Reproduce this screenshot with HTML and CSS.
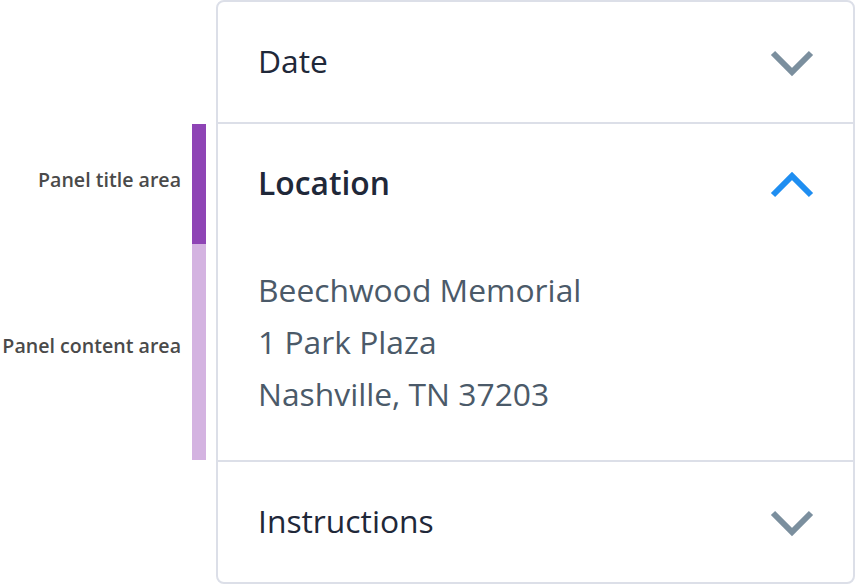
FILE: index.html
```html
<!DOCTYPE html>
<html>
<head>
<meta charset="utf-8">
<link rel="stylesheet" href="styles.css">
</head>
<body>
<div class="page">
  <div class="legend">
    <div class="legend-row title-row">
      <span class="legend-label">Panel title area</span>
      <span class="bar bar-title"></span>
    </div>
    <div class="legend-row content-row">
      <span class="legend-label">Panel content area</span>
      <span class="bar bar-content"></span>
    </div>
  </div>
  <div class="accordion">
    <div class="panel">
      <div class="panel-head">
        <span class="panel-title">Date</span>
        <svg class="chev" width="44" height="28" viewBox="0 0 44 28"><path d="M3 4 L22 23 L41 4" fill="none" stroke="#7b8f9e" stroke-width="6"/></svg>
      </div>
    </div>
    <div class="panel open">
      <div class="panel-head">
        <span class="panel-title">Location</span>
        <svg class="chev" width="44" height="28" viewBox="0 0 44 28"><path d="M3 24 L22 5 L41 24" fill="none" stroke="#1f8ef1" stroke-width="6"/></svg>
      </div>
      <div class="panel-body">
        <div>Beechwood Memorial</div>
        <div>1 Park Plaza</div>
        <div>Nashville, TN 37203</div>
      </div>
    </div>
    <div class="panel">
      <div class="panel-head">
        <span class="panel-title">Instructions</span>
        <svg class="chev" width="44" height="28" viewBox="0 0 44 28"><path d="M3 4 L22 23 L41 4" fill="none" stroke="#7b8f9e" stroke-width="6"/></svg>
      </div>
    </div>
  </div>
</div>
</body>
</html>
```
FILE: styles.css
```css
* { box-sizing: border-box; }
html, body { margin: 0; padding: 0; background: #fff; }
body { font-family: "Open Sans", "Noto Sans", sans-serif; }
.page {
  display: flex;
  width: 856px;
  height: 584px;
}
.legend {
  width: 206px;
  padding-top: 124px;
  display: flex;
  flex-direction: column;
}
.legend-row {
  display: flex;
  align-items: center;
  justify-content: flex-end;
}
.title-row { height: 120px; }
.content-row { height: 216px; }
.legend-label {
  font-size: 19.6px;
  font-weight: 600;
  color: #4a4a4a;
  margin-right: 11px;
}
.title-row .legend-label { padding-bottom: 10px; }
.content-row .legend-label { padding-bottom: 14px; }
.bar {
  width: 14px;
  align-self: stretch;
}
.bar-title { background: #8e44b5; }
.bar-content { background: #d4b3e1; }
.accordion {
  margin-left: 10px;
  width: 639px;
  height: 584px;
  border: 2px solid #dcdfe8;
  border-radius: 8px;
  display: flex;
  flex-direction: column;
}
.panel + .panel { border-top: 2px solid #dcdfe8; }
.panel-head {
  height: 120px;
  display: flex;
  align-items: center;
  justify-content: space-between;
  padding: 0 39px 0 40px;
}
.panel-title {
  font-size: 31.8px;
  line-height: 40px;
  color: #1f2839;
  padding-bottom: 2px;
}
.open .panel-title { font-weight: 600; }
.chev { display: block; margin-top: 1px; }
.panel-body {
  height: 216px;
  padding: 20px 40px 0;
  font-size: 31.8px;
  line-height: 52px;
  color: #4b5a69;
}
```
